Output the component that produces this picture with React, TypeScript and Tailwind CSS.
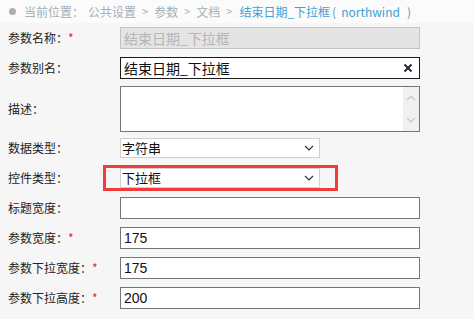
const cjk = "font-['Microsoft_YaHei','Noto_Sans_CJK_SC',sans-serif]";
const num = "font-['Liberation_Sans','Noto_Sans_CJK_SC',sans-serif]";

function Label({ text, required }: { text: string; required?: boolean }) {
  return (
    <div className={`w-[120px] shrink-0 pl-2 text-[12px] text-[#222] whitespace-nowrap ${cjk}`}>
      {text}
      {required && <span className="text-[#e8232a]">*</span>}
    </div>
  );
}

function Chevron({ className }: { className?: string }) {
  return (
    <svg width="10" height="6" viewBox="0 0 10 6" className={className}>
      <path d="M1 1l4 4 4-4" fill="none" stroke="currentColor" strokeWidth="1.2" />
    </svg>
  );
}

function TextInput({ value }: { value?: string }) {
  return (
    <div className={`w-[300px] h-[22px] bg-white border border-[#767676] flex items-center pl-[3px] text-[14px] text-[#111] ${num}`}>
      {value}
    </div>
  );
}

function Select({ value }: { value: string }) {
  return (
    <div className={`w-[200px] h-[20px] bg-white border border-[#cfcfcf] flex items-center justify-between pl-[1px] pr-[5px] text-[13px] text-[#111] ${cjk}`}>
      <span>{value}</span>
      <Chevron className="text-[#333]" />
    </div>
  );
}

export default function App() {
  return (
    <div className="w-[474px] h-[319px] bg-[#f6f6f6] overflow-hidden">
      {/* breadcrumb */}
      <div className={`h-[23px] bg-[#fbfbfb] flex items-center pl-[9px] text-[12px] text-[#a3b1ba] whitespace-nowrap ${cjk}`}>
        <span className="w-[7px] h-[7px] rounded-full bg-[#a7b1b9] mr-[8px]" />
        <span>当前位置：</span>
        <span className="ml-[4px]">公共设置</span>
        <span className="mx-[6px] text-[11px]">&gt;</span>
        <span>参数</span>
        <span className="mx-[6px] text-[11px]">&gt;</span>
        <span>文档</span>
        <span className="ml-[6px] mr-[7px] text-[11px]">&gt;</span>
        <span className="text-[#3fa1d6]">
          结束日期_下拉框<span className="ml-[2px] mr-[5px]">(</span>northwind<span className="ml-[7px]">)</span>
        </span>
      </div>

      <div className="flex flex-col">
        <div className="mt-[4px] flex items-center">
          <Label text="参数名称：" required />
          <div className={`w-[300px] h-[22px] bg-[#e4e4e4] border border-[#c3c3c3] flex items-center pl-[3px] text-[14px] text-[#b5b5b5] ${cjk}`}>
            结束日期_下拉框
          </div>
        </div>

        <div className="mt-[8px] flex items-center">
          <Label text="参数别名：" />
          <div className={`w-[300px] h-[22px] bg-white border border-[#1c1c1c] flex items-center justify-between pl-[3px] pr-[6px] text-[14px] text-[#111] ${cjk}`}>
            <span>结束日期_下拉框</span>
            <svg width="10" height="10" viewBox="0 0 10 10">
              <path d="M1.5 1.5l7 7M8.5 1.5l-7 7" stroke="#1a2230" strokeWidth="1.8" />
            </svg>
          </div>
        </div>

        <div className="mt-[7px] flex items-center">
          <Label text="描述：" />
          <div className="w-[300px] h-[46px] bg-white border border-[#767676] flex justify-end">
            <div className="w-[16px] h-full bg-[#f1f1f1] flex flex-col items-center justify-between py-[8px] text-[#c6c6c6]">
              <Chevron className="rotate-180" />
              <Chevron />
            </div>
          </div>
        </div>

        <div className="mt-[6px] flex items-center">
          <Label text="数据类型：" />
          <Select value="字符串" />
        </div>

        <div className="mt-[10px] flex items-center">
          <Label text="控件类型：" />
          <div className="relative">
            <Select value="下拉框" />
            <div className="absolute -left-[17px] -right-[18px] -top-[3px] -bottom-[3px] border-[3px] border-[#f23b3b] pointer-events-none" />
          </div>
        </div>

        <div className="mt-[9px] flex items-center">
          <Label text="标题宽度：" />
          <TextInput />
        </div>

        <div className="mt-[8px] flex items-center">
          <Label text="参数宽度：" required />
          <TextInput value="175" />
        </div>

        <div className="mt-[8px] flex items-center">
          <Label text="参数下拉宽度：" required />
          <TextInput value="175" />
        </div>

        <div className="mt-[8px] flex items-center">
          <Label text="参数下拉高度：" required />
          <TextInput value="200" />
        </div>
      </div>
    </div>
  );
}
